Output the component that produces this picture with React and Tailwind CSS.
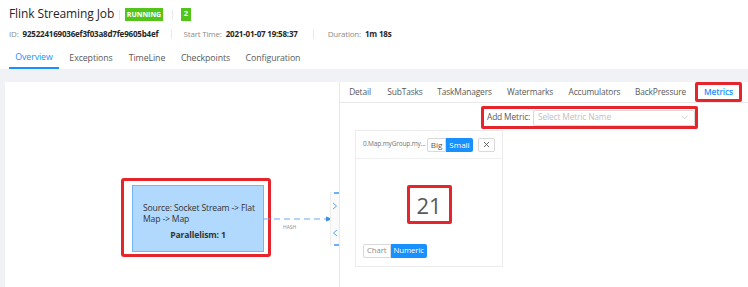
import React from 'react';

const font = { fontFamily: '"Open Sans", "Noto Sans", sans-serif' };

function Sep() {
  return <span className="inline-block h-[10px] w-px bg-[#e8e8e8]" />;
}

const jobTabs = [
  ['Overview', 'w-[50px]'],
  ['Exceptions', 'w-[64px]'],
  ['TimeLine', 'w-[48px]'],
  ['Checkpoints', 'w-[69px]'],
  ['Configuration', 'w-[66px]'],
];

function JobHeader() {
  return (
    <div className="h-[69px] bg-white px-[9px]">
      <div className="flex h-[27px] items-center pt-[1px]">
        <span className="w-[104px] whitespace-nowrap text-[12px] leading-none tracking-[-0.1px] text-[#262626]">Flink Streaming Job</span>
        <span className="ml-[6px]"><Sep /></span>
        <span className="ml-[5px] flex h-[13px] w-[38px] items-center justify-center bg-[#52c41a] text-[7px] font-bold leading-none text-white">RUNNING</span>
        <span className="ml-[9px]"><Sep /></span>
        <span className="ml-[8px] flex h-[13px] w-[10px] items-center justify-center bg-[#52c41a] text-[7.5px] font-bold leading-none text-white">2</span>
      </div>
      <div className="flex h-[14px] items-center whitespace-nowrap text-[8px] leading-none tracking-[-0.2px] text-[#8c8c8c]">
        <span>ID:</span>
        <span className="ml-[4px] w-[137px] font-bold text-[#262626]">925224169036ef3f03a8d7fe9605b4ef</span>
        <span className="ml-[11px]"><Sep /></span>
        <span className="ml-[12px]">Start Time:</span>
        <span className="ml-[4px] w-[78px] font-bold text-[#262626]">2021-01-07 19:58:37</span>
        <span className="ml-[9px]"><Sep /></span>
        <span className="ml-[14px]">Duration:</span>
        <span className="ml-[4px] font-bold text-[#262626]">1m 18s</span>
      </div>
      <div className="mt-[8px] flex h-[20px] items-stretch text-[8.8px] tracking-[-0.1px] text-[#595959]">
        {jobTabs.map(([t, w], i) => (
          <div
            key={t}
            className={`flex items-center justify-center ${w} ${i === 0 ? 'border-b-2 border-[#1890ff] text-[#1890ff]' : ''}`}
          >
            {t}
          </div>
        ))}
      </div>
    </div>
  );
}

function Canvas() {
  return (
    <div className="relative h-full w-[334px] shrink-0">
      <div className="absolute left-[116px] top-[96px] h-[79px] w-[150px] rounded-[3px] border-[3px] border-[#e5252b] bg-white">
        <div className="absolute left-[8px] top-[4px] h-[67px] w-[132px] border border-[#74b6f5] bg-[#b1d9fd] text-[8.6px] leading-[11px] tracking-[-0.15px] text-[#333]">
          <div className="mt-[17px] whitespace-nowrap pl-[10px]">
            <div>Source: Socket Stream -&gt; Flat</div>
            <div>Map -&gt; Map</div>
          </div>
          <div className="mt-[5px] text-center font-bold">Parallelism: 1</div>
        </div>
      </div>
      <svg className="absolute left-[259px] top-[133px]" width="70" height="10" viewBox="0 0 70 10">
        <line x1="0" y1="4" x2="64" y2="4" stroke="#6aa8ee" strokeWidth="1" strokeDasharray="6 4" />
        <path d="M62 1.5 L69 4 L62 6.5 Z" fill="#3c8ee8" />
      </svg>
      <span className="absolute left-[278px] top-[143px] text-[5px] leading-none text-[#8c8c8c]">HASH</span>
      <div className="absolute left-[325px] top-[110px] flex h-[54px] w-[9px] flex-col items-center justify-around border-l border-[#eeeeee] bg-[#fafafa]">
        <span className="absolute right-0 top-0 h-[2px] w-[5px] bg-[#6db0f5]" />
        <svg width="6" height="8" viewBox="0 0 6 8"><path d="M1 1 L4.5 4 L1 7" fill="none" stroke="#5aa3f0" strokeWidth="1" /></svg>
        <svg width="6" height="8" viewBox="0 0 6 8"><path d="M5 1 L1.5 4 L5 7" fill="none" stroke="#5aa3f0" strokeWidth="1" /></svg>
        <span className="absolute bottom-0 right-0 h-[2px] w-[5px] bg-[#6db0f5]" />
      </div>
    </div>
  );
}

function MetricCard() {
  return (
    <div className="ml-[15px] mt-[1px] flex h-[137px] w-[148px] flex-col border border-[#ececec] bg-white">
      <div className="flex h-[28px] items-center border-b border-[#f0f0f0] pl-[7px] pr-[6px]">
        <span className="w-[57px] whitespace-nowrap text-[6.5px] leading-none tracking-[-0.15px] text-[#737373]">0.Map.myGroup.my...</span>
        <div className="ml-[7px] flex h-[14px] text-[8px] leading-none">
          <span className="flex w-[19px] items-center justify-center rounded-l-[2px] border border-[#d9d9d9] text-[#595959]">Big</span>
          <span className="flex w-[27px] items-center justify-center rounded-r-[2px] bg-[#1890ff] text-white">Small</span>
        </div>
        <span className="ml-[5px] flex h-[14px] w-[17px] items-center justify-center rounded-[2px] border border-[#d9d9d9]">
          <svg width="7" height="7" viewBox="0 0 7 7"><path d="M1 1 L6 6 M6 1 L1 6" stroke="#595959" strokeWidth="0.9" /></svg>
        </span>
      </div>
      <div className="flex flex-1 items-start justify-center pt-[26px]">
        <div className="flex h-[39px] w-[45px] items-center justify-center rounded-[2px] border-[3px] border-[#e5252b] text-[22px] leading-none text-[#595959]">21</div>
      </div>
      <div className="flex h-[22px] items-start pl-[7px] text-[7.8px] leading-none tracking-[-0.1px]">
        <span className="flex h-[14px] items-center rounded-l-[2px] border border-[#d9d9d9] px-[3px] text-[#8c8c8c]">Chart</span>
        <span className="flex h-[14px] items-center rounded-r-[2px] bg-[#1890ff] px-[3px] text-white">Numeric</span>
      </div>
    </div>
  );
}

const panelTabs = [
  ['Detail', 'w-[40px]'],
  ['SubTasks', 'w-[50px]'],
  ['TaskManagers', 'w-[69px]'],
  ['Watermarks', 'w-[62px]'],
  ['Accumulators', 'w-[67px]'],
  ['BackPressure', 'w-[65px]'],
];

function DetailPanel() {
  return (
    <div className="flex min-w-0 flex-1 flex-col border-l border-[#e8e8e8]">
      <div className="flex h-[21px] items-center whitespace-nowrap border-b border-[#e8e8e8] text-[8.4px] tracking-[-0.15px] text-[#595959]">
        {panelTabs.map(([t, w]) => (
          <span key={t} className={`flex justify-center ${w}`}>{t}</span>
        ))}
        <span className="ml-[2px] flex h-[20px] w-[47px] items-center justify-center self-start rounded-[2px] border-[3px] border-[#e5252b] font-semibold text-[#1890ff]">Metrics</span>
      </div>
      <div className="mt-[3px] flex">
        <div className="ml-[141px] flex h-[23px] w-[217px] items-center whitespace-nowrap rounded-[2px] border-[3px] border-[#e5252b] pl-[3px] text-[8.4px] tracking-[-0.15px]">
          <span className="text-[#595959]">Add Metric:</span>
          <div className="ml-[3px] flex h-[16px] w-[163px] items-center justify-between rounded-[2px] border border-[#d9d9d9] pl-[4px] pr-[6px] text-[#bfbfbf]">
            <span>Select Metric Name</span>
            <svg width="7" height="5" viewBox="0 0 7 5"><path d="M0.5 0.8 L3.5 3.8 L6.5 0.8" fill="none" stroke="#c4c4c4" strokeWidth="0.8" /></svg>
          </div>
        </div>
      </div>
      <MetricCard />
    </div>
  );
}

export default function App() {
  return (
    <div className="h-[287px] w-[748px] overflow-hidden bg-[#f0f2f5]" style={font}>
      <JobHeader />
      <div className="pl-[5px] pt-[13px]">
        <div className="flex h-[205px] bg-white">
          <Canvas />
          <DetailPanel />
        </div>
      </div>
    </div>
  );
}
